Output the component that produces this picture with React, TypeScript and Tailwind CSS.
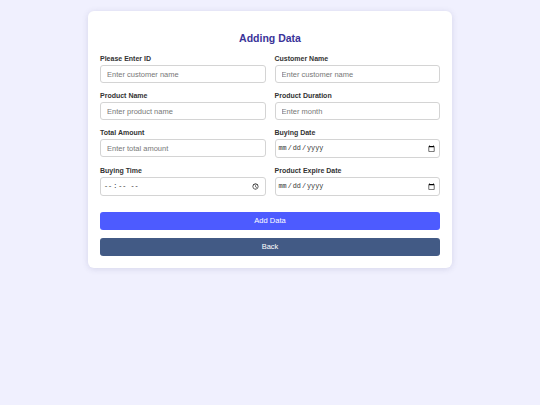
import React from 'react';

const Field = ({ label, children }: { label: string; children: React.ReactNode }) => (
  <div className="flex flex-col">
    <label className="pt-[1px] text-[7px] font-bold leading-[12px] text-[#333]">{label}</label>
    {children}
  </div>
);

const textInput =
  "h-[18px] w-full rounded-[3px] border border-[#d4d4d4] bg-white px-[6px] text-[7.5px] text-[#333] placeholder:text-[#777] outline-none";
const dateInput =
  "h-[19px] w-full rounded-[3px] border border-[#d4d4d4] bg-white px-[2px] font-['Liberation_Mono'] text-[6.8px] text-[#333] outline-none";

export default function App() {
  return (
    <div className="min-h-screen bg-[#f0f0fe] pt-[11px] font-['Liberation_Sans',Arial,sans-serif]">
      <div className="mx-auto w-[364px] rounded-[6px] bg-white px-[12px] pt-[20px] pb-[12px] shadow-[0_1px_6px_rgba(60,60,120,0.15)]">
        <h2 className="mb-[7px] text-center text-[10.5px] font-bold leading-[14px] text-[#3a3399]">Adding Data</h2>
        <div className="grid grid-cols-2 gap-x-[9px] gap-y-[6px]">
          <Field label="Please Enter ID">
            <input className={textInput} placeholder="Enter customer name" />
          </Field>
          <Field label="Customer Name">
            <input className={textInput} placeholder="Enter customer name" />
          </Field>
          <Field label="Product Name">
            <input className={textInput} placeholder="Enter product name" />
          </Field>
          <Field label="Product Duration">
            <input className={textInput} placeholder="Enter month" />
          </Field>
          <Field label="Total Amount">
            <input className={textInput} placeholder="Enter total amount" />
          </Field>
          <Field label="Buying Date">
            <input type="date" className={dateInput} />
          </Field>
          <Field label="Buying Time">
            <input type="time" className={dateInput} />
          </Field>
          <Field label="Product Expire Date">
            <input type="date" className={dateInput} />
          </Field>
        </div>
        <div className="mt-[16px] flex flex-col gap-[8px]">
          <button className="h-[18px] w-full rounded-[3px] bg-[#4d5bff] text-[7.5px] text-white">Add Data</button>
          <button className="h-[18px] w-full rounded-[3px] bg-[#425a85] text-[7.5px] text-white">Back</button>
        </div>
      </div>
    </div>
  );
}
